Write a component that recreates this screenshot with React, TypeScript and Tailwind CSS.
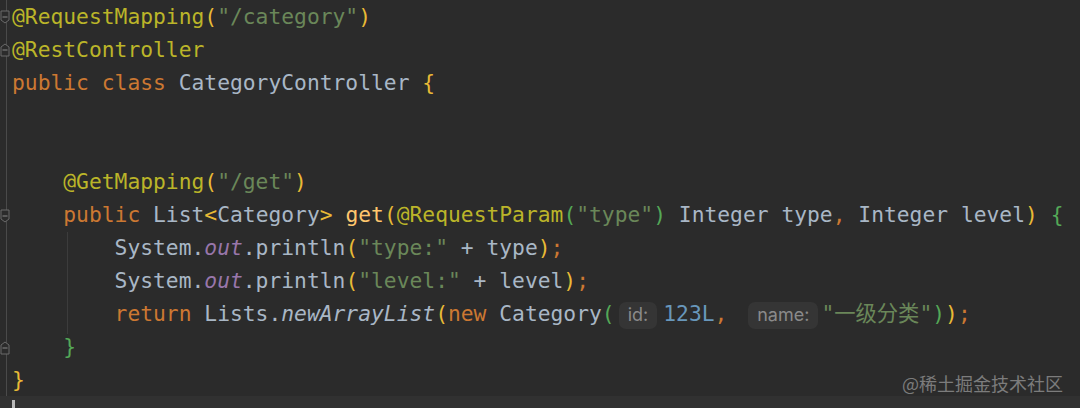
import React from "react";

type Tok = [string, string] | ["@hint", string, string];

const ann = "text-[#bbb529]";
const str = "text-[#6a8759]";
const kw = "text-[#cc7832]";
const id = "text-[#a9b7c6]";
const yb = "text-[#e8ba36]";
const gb = "text-[#54a857]";
const num = "text-[#6897bb]";
const fld = "text-[#9876aa] italic";
const itl = "text-[#a9b7c6] italic";
const mth = "text-[#ffc66d]";

const lines: Tok[][] = [
  [["@RequestMapping", ann], ["(", yb], ['"/category"', str], [")", yb]],
  [["@RestController", ann]],
  [["public class ", kw], ["CategoryController ", id], ["{", yb]],
  [],
  [],
  [["    @GetMapping", ann], ["(", yb], ['"/get"', str], [")", yb]],
  [
    ["    public ", kw],
    ["List", id],
    ["<", yb],
    ["Category", id],
    ["> ", yb],
    ["get", mth],
    ["(", yb],
    ["@RequestParam", ann],
    ["(", gb],
    ['"type"', str],
    [")", gb],
    [" Integer type", id],
    [",", kw],
    [" Integer level", id],
    [")", yb],
    [" {", gb],
  ],
  [
    ["        System.", id],
    ["out", fld],
    [".println", id],
    ["(", yb],
    ['"type:"', str],
    [" + type", id],
    [")", yb],
    [";", kw],
  ],
  [
    ["        System.", id],
    ["out", fld],
    [".println", id],
    ["(", yb],
    ['"level:"', str],
    [" + level", id],
    [")", yb],
    [";", kw],
  ],
  [
    ["        return ", kw],
    ["Lists.", id],
    ["newArrayList", itl],
    ["(", yb],
    ["new ", kw],
    ["Category", id],
    ["(", gb],
    ["@hint", "id:", "ml-[4px] mr-[6px]"],
    ["123L", num],
    [",", kw],
    [" ", id],
    ["@hint", "name:", "ml-[8px] mr-[3px]"],
    ['"一级分类"', str],
    [")", gb],
    [")", yb],
    [";", kw],
  ],
  [["    }", gb]],
  [["}", yb]],
];

function Hint({ text, space }: { text: string; space: string }) {
  return (
    <span
      className={`inline-flex h-[27px] items-center rounded-[7px] bg-[#353535] px-[9px] align-middle font-['Inter','Noto_Sans',sans-serif] text-[18px] leading-none text-[#8a8a8a] ${space}`}
    >
      {text}
    </span>
  );
}

function FoldMark({ top, up }: { top: number; up?: boolean }) {
  return (
    <svg
      className="absolute left-0"
      style={{ top }}
      width="10"
      height="14"
      viewBox="0 0 10 14"
    >
      <path
        d={up ? "M1 13 V4 L5 1 L9 4 V13 Z" : "M1 1 V10 L5 13 L9 10 V1 Z"}
        fill="#2b2b2b"
        stroke="#6a6a6a"
        strokeWidth="1"
      />
      <path d="M2.5 7 H7.5" stroke="#8a8a8a" strokeWidth="1" />
    </svg>
  );
}

export default function App() {
  return (
    <div className="flex h-[408px] w-[1080px] flex-col overflow-hidden bg-[#2b2b2b]">
      <div className="relative flex flex-1">
        <div className="relative w-[12px] shrink-0">
          <div className="h-full w-[7px] border-r border-[#4a4a4a]" />
          <FoldMark top={10} />
          <FoldMark top={43} up />
          <FoldMark top={209} />
          <FoldMark top={341} up />
        </div>
        <div className="relative flex-1 font-['DejaVu_Sans_Mono','Noto_Sans_CJK_SC',monospace] text-[21.3px] leading-[33px] whitespace-pre">
          <div className="absolute left-[55px] top-[232px] h-[102px] w-px bg-[#3c3c3c]" />
          {lines.map((line, i) => (
            <div key={i} className="h-[33px]">
              {line.map((t, j) =>
                t[0] === "@hint" ? (
                  <Hint key={j} text={t[1]} space={(t as [string, string, string])[2]} />
                ) : (
                  <span key={j} className={t[1]}>
                    {t[0]}
                  </span>
                )
              )}
            </div>
          ))}
          <div className="absolute bottom-[4px] right-[17px] font-['Noto_Sans_CJK_SC',sans-serif] text-[18px] leading-none text-[#7c7c7c]">
            @稀土掘金技术社区
          </div>
        </div>
      </div>
      <div className="flex h-[12px] shrink-0 items-end bg-[#313131] pl-[12px]">
        <div className="h-[8px] w-[3px] bg-[#b8b8b8]" />
      </div>
    </div>
  );
}
